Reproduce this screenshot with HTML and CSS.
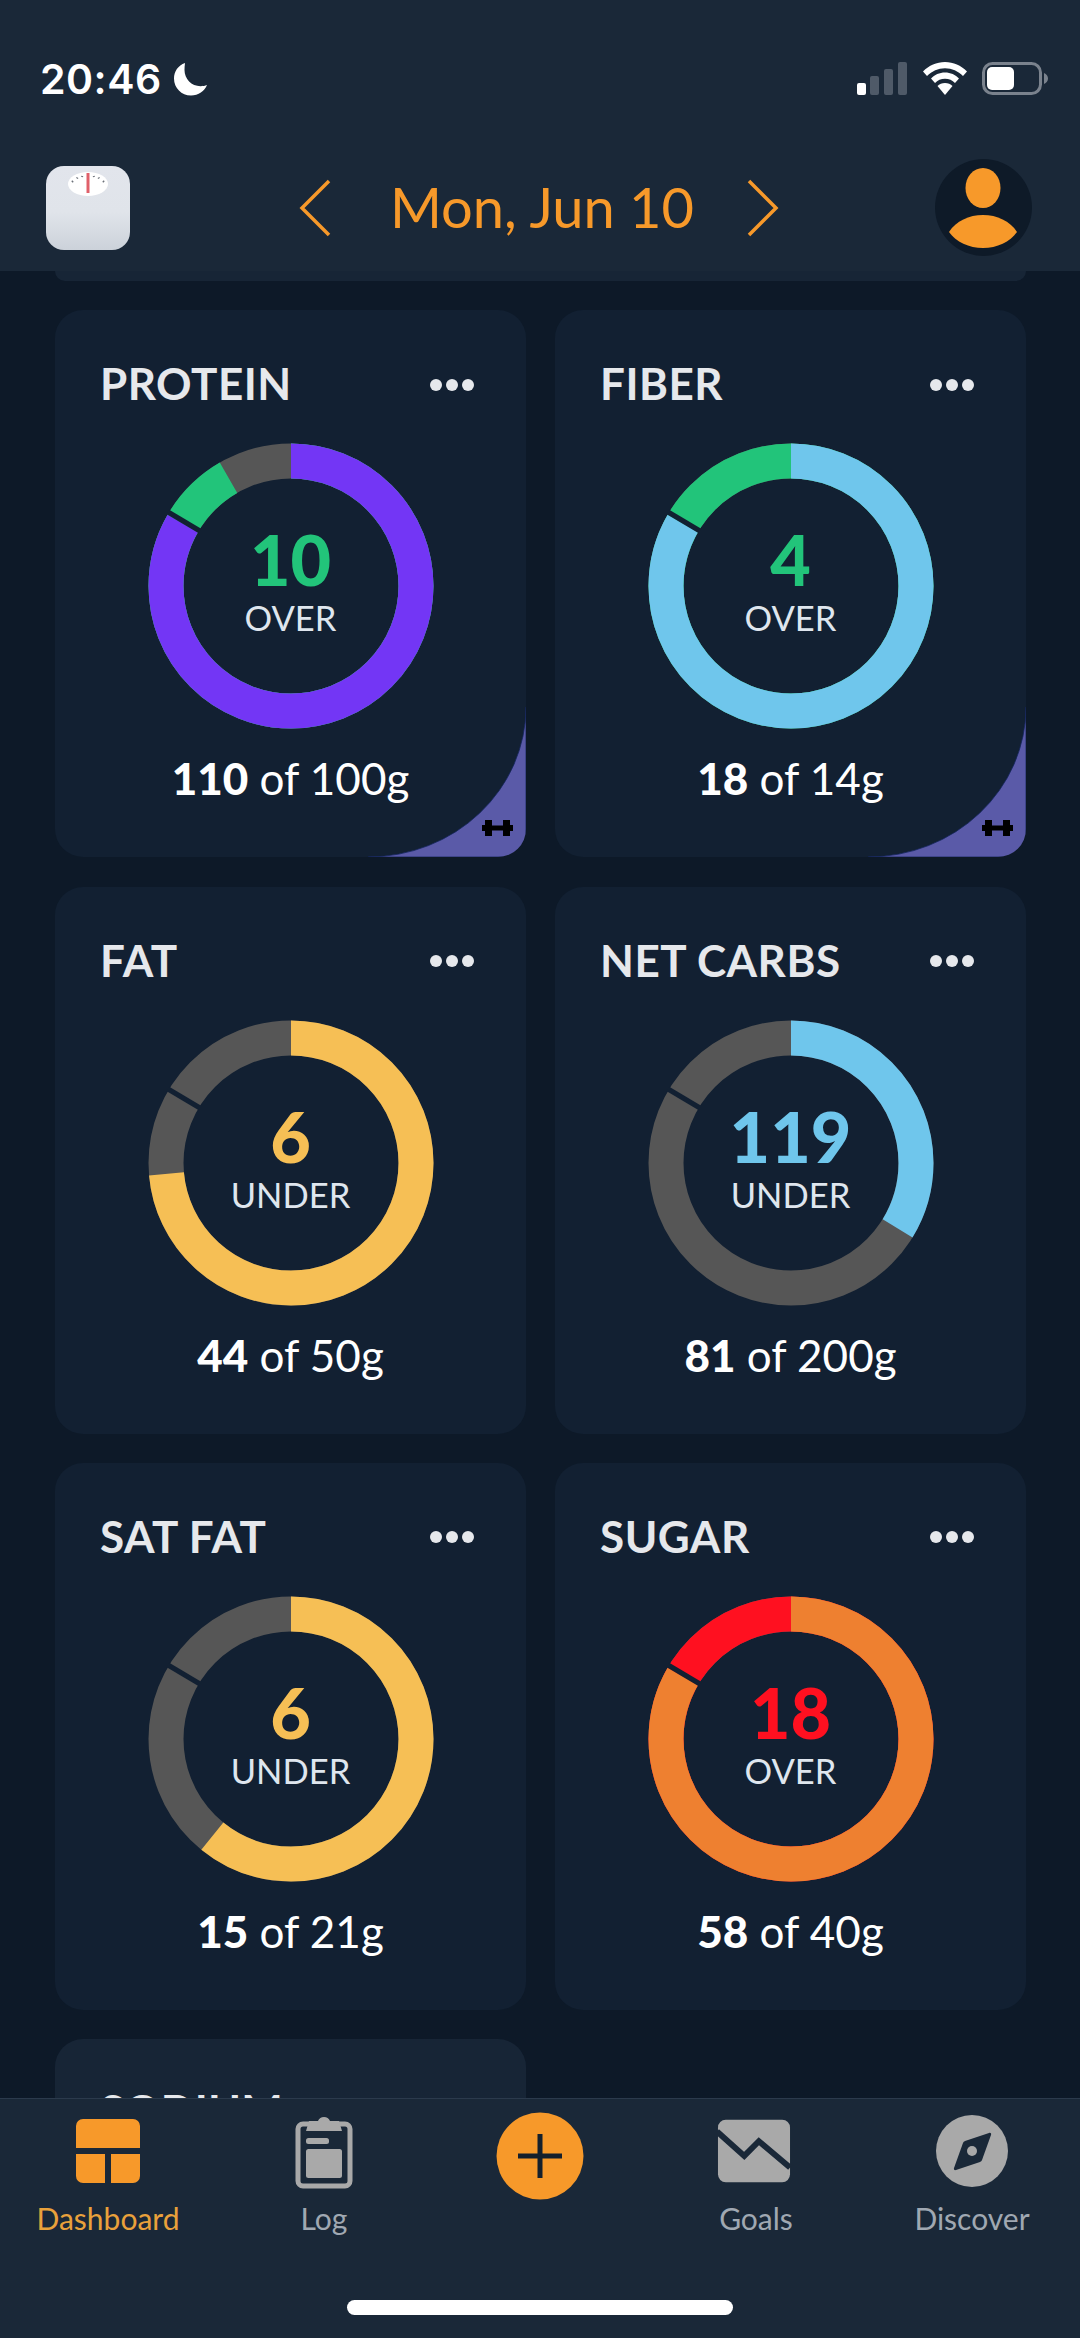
FILE: index.html
```html
<!DOCTYPE html>
<html lang="en">
<head>
  <meta charset="UTF-8">
  <title>Dashboard</title>
  <link rel="stylesheet" href="styles.css">
</head>
<body>
  <div class="app">
    <header class="topbar">
      <div class="statusbar">
        <div class="status-left">
          <span class="clock">20:46</span>
          <svg class="moon" width="34" height="34" viewBox="0 0 34 34"><path fill="#fff" d="M11 1C4 3.500 0 9.500 0 16.500 0 26 7.500 33.500 17 33.500c7.500 0 13.500-4.500 16-10.500-2 .8-4 1.200-6.500 1.200C17.500 24.200 10.500 17 10.500 8c0-2.500.2-4.800.5-7z"/></svg>
        </div>
        <div class="status-right">
          <svg width="50" height="33" viewBox="0 0 50 33">
            <rect x="0" y="21" width="9" height="12" rx="2" fill="#fff"/>
            <rect x="13" y="14" width="9" height="19" rx="2" fill="#4f5a68"/>
            <rect x="27" y="7" width="9" height="26" rx="2" fill="#4f5a68"/>
            <rect x="41" y="0" width="9" height="33" rx="2" fill="#4f5a68"/>
          </svg>
          <svg width="44" height="33" viewBox="0 0 44 33">
            <path fill="#fff" d="M22 0C13.500 0 6 3.500 0 9.500l4 4.500C9 9 15 6.200 22 6.200S35 9 40 14l4-4.500C38 3.500 30.500 0 22 0z"/>
            <path fill="#fff" d="M22 10.500c-5.500 0-10.500 2.300-14 6l4 4.400c2.600-2.700 6-4.200 10-4.200s7.400 1.500 10 4.200l4-4.400c-3.500-3.700-8.500-6-14-6z"/>
            <path fill="#fff" d="M22 21c-3 0-5.600 1.200-7.500 3.100L22 33l7.500-8.900C27.600 22.200 25 21 22 21z"/>
          </svg>
          <svg width="66" height="33" viewBox="0 0 66 33">
            <rect x="1.500" y="1.500" width="57" height="30" rx="9" fill="none" stroke="#7a828d" stroke-width="3"/>
            <rect x="5" y="5" width="27" height="23" rx="5" fill="#fff"/>
            <path d="M62 11c2.500 1 4 3 4 5.500s-1.500 4.500-4 5.500z" fill="#7a828d"/>
          </svg>
        </div>
      </div>
      <div class="datebar">
        <div class="scale-icon">
          <svg width="44" height="28" viewBox="0 0 44 28">
            <ellipse cx="22" cy="13" rx="20" ry="12" fill="#fff"/>
            <path d="M6 11l1-1M11 7.500l.5-1M16 6l.3-1M28 6l-.3-1M33 7.500l-.5-1M38 11l-1-1" stroke="#6b7078" stroke-width="2"/>
            <path d="M22 2v20" stroke="#e0606a" stroke-width="3"/>
          </svg>
        </div>
        <div class="date-nav">
          <svg width="32" height="58" viewBox="0 0 32 58"><path d="M30 2 3 29l27 27" fill="none" stroke="#f7992a" stroke-width="3.500"/></svg>
          <span class="date-label">Mon, Jun 10</span>
          <svg width="32" height="58" viewBox="0 0 32 58"><path d="m2 2 27 27L2 56" fill="none" stroke="#f7992a" stroke-width="3.500"/></svg>
        </div>
        <svg class="avatar" width="97" height="97" viewBox="0 0 97 97">
          <circle cx="48.500" cy="48.500" r="48.500" fill="#0e1a28"/>
          <ellipse cx="48" cy="29" rx="17.500" ry="20" fill="#f7992a"/>
          <path fill="#f7992a" d="M14 73c7-11 20-17 34-17s27 6 34 17c-7 10-20 16-34 16s-27-6-34-16z"/>
        </svg>
      </div>
    </header>

    <main class="content">
      <div class="card-stub"></div>

      <section class="card">
        <div class="card-head"><h3>PROTEIN</h3><div class="dots"><i></i><i></i><i></i></div></div>
        <div class="ring">
          <svg width="286" height="286" viewBox="0 0 286 286">
            <circle class="track" cx="143" cy="143" r="125"/>
            <g class="arcs">
              <circle cx="143" cy="143" r="125" pathLength="360" stroke="#22c47a" stroke-dasharray="330 360"/>
              <circle cx="143" cy="143" r="125" pathLength="360" stroke="#7336f5" stroke-dasharray="300 360"/>
            </g>
            <line class="goal" x1="20" y1="69" x2="52" y2="88"/>
          </svg>
          <div class="ring-text"><b class="c-green">10</b><span>OVER</span></div>
        </div>
        <p class="amount"><b>110</b> of 100g</p>
        <svg class="corner" width="158" height="150" viewBox="0 0 158 150">
          <path d="M0 150A158 150 0 0 0 158 0v150z" fill="#5a5aa8" stroke="#14265a" stroke-width=".8"/>
          <path d="M114 118h3v-5h7v5.500h11V113h7v5h3v6h-3v5h-7v-5.500h-11v5.500h-7v-5h-3z" fill="#000"/>
        </svg>
      </section>

      <section class="card">
        <div class="card-head"><h3>FIBER</h3><div class="dots"><i></i><i></i><i></i></div></div>
        <div class="ring">
          <svg width="286" height="286" viewBox="0 0 286 286">
            <circle class="track" cx="143" cy="143" r="125"/>
            <g class="arcs">
              <circle cx="143" cy="143" r="125" pathLength="360" stroke="#22c47a" stroke-dasharray="360 360"/>
              <circle cx="143" cy="143" r="125" pathLength="360" stroke="#6fc6ec" stroke-dasharray="300 360"/>
            </g>
            <line class="goal" x1="20" y1="69" x2="52" y2="88"/>
          </svg>
          <div class="ring-text"><b class="c-green">4</b><span>OVER</span></div>
        </div>
        <p class="amount"><b>18</b> of 14g</p>
        <svg class="corner" width="158" height="150" viewBox="0 0 158 150">
          <path d="M0 150A158 150 0 0 0 158 0v150z" fill="#5a5aa8" stroke="#14265a" stroke-width=".8"/>
          <path d="M114 118h3v-5h7v5.500h11V113h7v5h3v6h-3v5h-7v-5.500h-11v5.500h-7v-5h-3z" fill="#000"/>
        </svg>
      </section>

      <section class="card">
        <div class="card-head"><h3>FAT</h3><div class="dots"><i></i><i></i><i></i></div></div>
        <div class="ring">
          <svg width="286" height="286" viewBox="0 0 286 286">
            <circle class="track" cx="143" cy="143" r="125"/>
            <g class="arcs">
              <circle cx="143" cy="143" r="125" pathLength="360" stroke="#f6bf55" stroke-dasharray="265 360"/>
            </g>
            <line class="goal" x1="20" y1="69" x2="52" y2="88"/>
          </svg>
          <div class="ring-text"><b class="c-yellow">6</b><span>UNDER</span></div>
        </div>
        <p class="amount"><b>44</b> of 50g</p>
      </section>

      <section class="card">
        <div class="card-head"><h3>NET CARBS</h3><div class="dots"><i></i><i></i><i></i></div></div>
        <div class="ring">
          <svg width="286" height="286" viewBox="0 0 286 286">
            <circle class="track" cx="143" cy="143" r="125"/>
            <g class="arcs">
              <circle cx="143" cy="143" r="125" pathLength="360" stroke="#6fc6ec" stroke-dasharray="121.500 360"/>
            </g>
            <line class="goal" x1="20" y1="69" x2="52" y2="88"/>
          </svg>
          <div class="ring-text"><b class="c-blue">119</b><span>UNDER</span></div>
        </div>
        <p class="amount"><b>81</b> of 200g</p>
      </section>

      <section class="card">
        <div class="card-head"><h3>SAT FAT</h3><div class="dots"><i></i><i></i><i></i></div></div>
        <div class="ring">
          <svg width="286" height="286" viewBox="0 0 286 286">
            <circle class="track" cx="143" cy="143" r="125"/>
            <g class="arcs">
              <circle cx="143" cy="143" r="125" pathLength="360" stroke="#f6bf55" stroke-dasharray="219 360"/>
            </g>
            <line class="goal" x1="20" y1="69" x2="52" y2="88"/>
          </svg>
          <div class="ring-text"><b class="c-yellow">6</b><span>UNDER</span></div>
        </div>
        <p class="amount"><b>15</b> of 21g</p>
      </section>

      <section class="card">
        <div class="card-head"><h3>SUGAR</h3><div class="dots"><i></i><i></i><i></i></div></div>
        <div class="ring">
          <svg width="286" height="286" viewBox="0 0 286 286">
            <circle class="track" cx="143" cy="143" r="125"/>
            <g class="arcs">
              <circle cx="143" cy="143" r="125" pathLength="360" stroke="#ff1020" stroke-dasharray="360 360"/>
              <circle cx="143" cy="143" r="125" pathLength="360" stroke="#ee8030" stroke-dasharray="300 360"/>
            </g>
            <line class="goal" x1="20" y1="69" x2="52" y2="88"/>
          </svg>
          <div class="ring-text"><b class="c-red">18</b><span>OVER</span></div>
        </div>
        <p class="amount"><b>58</b> of 40g</p>
      </section>

      <section class="card card-next">
        <div class="card-head"><h3>SODIUM</h3></div>
      </section>
    </main>

    <nav class="tabbar">
      <div class="tabs">
        <a class="tab active">
          <svg width="66" height="66" viewBox="0 0 66 66">
            <path fill="#f7992a" d="M8 1h50a7 7 0 0 1 7 7v22H1V8a7 7 0 0 1 7-7zM1 36h29v29H8a7 7 0 0 1-7-7zM36 36h29v22a7 7 0 0 1-7 7H36z"/>
          </svg>
          <span>Dashboard</span>
        </a>
        <a class="tab">
          <svg width="66" height="74" viewBox="0 0 66 74">
            <rect x="7" y="10" width="52" height="62" rx="5" fill="none" stroke="#a9a9a9" stroke-width="5"/>
            <path fill="#a9a9a9" d="M18 7h9a6.500 6.500 0 0 1 12 0h9l3 10H15z"/>
            <rect x="15" y="24" width="23" height="6" rx="2.500" fill="#a9a9a9"/>
            <rect x="15" y="35" width="36" height="29" rx="2.500" fill="#a9a9a9"/>
          </svg>
          <span>Log</span>
        </a>
        <a class="tab tab-add">
          <svg width="88" height="88" viewBox="0 0 88 88">
            <circle cx="44" cy="44" r="43.500" fill="#f7992a"/>
            <path d="M22 44h44M44 22v44" stroke="#15202c" stroke-width="5"/>
          </svg>
        </a>
        <a class="tab tab-goals">
          <svg width="74" height="66" viewBox="0 0 76 66">
            <rect x="1" y="1" width="74" height="64" rx="8" fill="#a9a9a9"/>
            <path d="M0 13l28 25 15-15 32 27" fill="none" stroke="#1a2838" stroke-width="6"/>
          </svg>
          <span>Goals</span>
        </a>
        <a class="tab">
          <svg width="74" height="74" viewBox="0 0 74 74">
            <circle cx="37" cy="37" r="36" fill="#a9a9a9"/>
            <path fill="#1a2838" d="M54 19c1.500-.5 2.500.5 2 2l-9 25c-.5 1-1 1.500-2 2l-24 8c-1.500.5-2.500-.5-2-2l9-25c.5-1 1-1.500 2-2z"/>
            <circle cx="37" cy="37" r="5" fill="#a9a9a9"/>
          </svg>
          <span>Discover</span>
        </a>
      </div>
      <div class="home-indicator"></div>
    </nav>
  </div>
</body>
</html>
```

FILE: styles.css
```css
html, body {
  margin: 0;
  padding: 0;
  background: #0d1928;
}

.app {
  width: 1080px;
  height: 2338px;
  display: flex;
  flex-direction: column;
  overflow: hidden;
  font-family: "Lato", "Noto Sans", sans-serif;
}

/* TOP BAR */
.topbar {
  height: 271px;
  flex: none;
  background: #1a2838;
  box-sizing: border-box;
  padding-top: 62px;
}

.statusbar {
  display: flex;
  justify-content: space-between;
  align-items: center;
  height: 33px;
  padding: 0 32px 0 40px;
}

.status-left,
.status-right {
  display: flex;
  align-items: center;
}

.status-left {
  gap: 12px;
}

.status-right {
  gap: 15.500px;
}

.clock {
  font-family: "Inter", sans-serif;
  font-size: 41px;
  font-weight: 600;
  color: #fff;
  letter-spacing: 0.5px;
}

.datebar {
  display: grid;
  grid-template-columns: 1fr auto 1fr;
  align-items: center;
  height: 97px;
  margin-top: 64px;
  padding: 0 48px 0 46px;
}

.scale-icon {
  width: 84px;
  height: 84px;
  border-radius: 18px;
  background: linear-gradient(#e2e5ec, #e0e4ea 55%, #ccd2da);
  display: flex;
  justify-content: center;
  padding-top: 5px;
  box-sizing: border-box;
}

.date-nav {
  display: flex;
  align-items: center;
  gap: 56px;
}

.date-label {
  font-size: 56px;
  color: #f7992a;
  margin: -3px -3px 0 3px;
}

.avatar {
  justify-self: end;
}

/* CARDS */
.content {
  flex: 1;
  min-height: 0;
  overflow: hidden;
  display: grid;
  grid-template-columns: 471px 471px;
  grid-template-rows: 10px;
  grid-auto-rows: 547px;
  gap: 29.300px 29px;
  padding: 0 54px 0 55px;
}

.card-stub {
  grid-column: 1 / -1;
  background: #172536;
  border-radius: 0 0 28px 28px;
}

.card {
  position: relative;
  background: #122032;
  border-radius: 28px;
  overflow: hidden;
  display: flex;
  flex-direction: column;
  align-items: center;
}

.card-next {
  background: #172536;
}

.card-head {
  align-self: stretch;
  display: flex;
  justify-content: space-between;
  align-items: center;
  height: 44px;
  margin-top: 51px;
  padding: 0 52px 0 45px;
}

.card-next .card-head {
  margin-top: 49px;
}

.card-head h3 {
  margin: 0;
  font-size: 44px;
  font-weight: 700;
  letter-spacing: 0.5px;
  color: #e6e8ec;
}

.dots {
  display: flex;
  gap: 4px;
  margin-top: 3px;
}

.dots i {
  width: 12px;
  height: 12px;
  border-radius: 50%;
  background: #e6e8ec;
}

.ring {
  display: grid;
  width: 286px;
  height: 286px;
  margin-top: 38px;
}

.ring > * {
  grid-area: 1 / 1;
}

.ring circle {
  fill: none;
  stroke-width: 35;
}

.ring .track {
  stroke: #565656;
}

.ring .arcs {
  transform: rotate(-90deg);
  transform-origin: 143px 143px;
}

.ring .goal {
  stroke: #122032;
  stroke-width: 5;
}

.ring-text {
  display: flex;
  flex-direction: column;
  align-items: center;
  justify-content: center;
  padding-bottom: 10px;
  color: #dfe6ee;
}

.ring-text b {
  font-size: 70px;
  line-height: 70px;
  margin-bottom: 4px;
  font-weight: 900;
}

.ring-text span {
  font-size: 34.500px;
  line-height: 40px;
}

.c-green { color: #22c47a; }
.c-yellow { color: #f6bf55; }
.c-blue { color: #6fc6ec; }
.c-red { color: #ff1020; }

.amount {
  margin: 23px 0 0;
  font-size: 44px;
  line-height: 52px;
  color: #fff;
}

.amount b {
  font-weight: 900;
}

.corner {
  position: absolute;
  right: 0;
  bottom: 0;
}

/* TAB BAR */
.tabbar {
  height: 240px;
  flex: none;
  box-sizing: border-box;
  background: #1a2838;
  border-top: 1px solid #2b3a4c;
  position: relative;
}

.tabs {
  display: grid;
  grid-template-columns: repeat(5, 216px);
  padding-top: 14px;
}

.tab {
  display: flex;
  flex-direction: column;
  align-items: center;
  color: #a0a8b2;
  font-size: 30px;
}

.tab svg {
  height: 76px;
  margin-bottom: 11px;
}

.tab.active {
  color: #e9a13b;
}

.tab-add svg {
  height: 88px;
  margin-top: -1px;
}

.tab-goals svg {
  margin-right: 4px;
}

.home-indicator {
  position: absolute;
  left: 347px;
  bottom: 23px;
  width: 386px;
  height: 15px;
  border-radius: 8px;
  background: #fff;
}
```
